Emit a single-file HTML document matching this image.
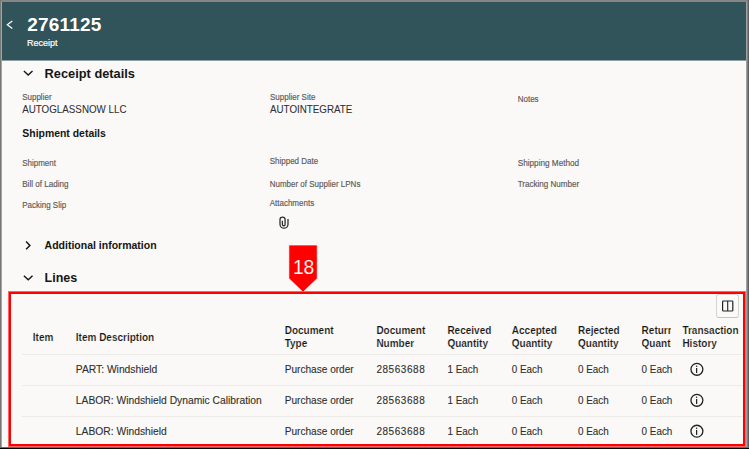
<!DOCTYPE html>
<html><head><meta charset="utf-8"><style>
html,body{margin:0;padding:0;}
body{width:749px;height:449px;position:relative;overflow:hidden;background:#595959;font-family:"Liberation Sans",sans-serif;}
.frame{position:absolute;left:0;top:0;width:749px;height:449px;background:#858585;}
.fl1{position:absolute;left:0;top:0;width:1px;height:447px;background:#777;}
.fl2{position:absolute;left:1px;top:2px;width:1px;height:445px;background:#a5a5a5;}
.fr1{position:absolute;left:746px;top:2px;width:1px;height:445px;background:#a0a0a0;}
.fr2{position:absolute;left:747px;top:0;width:1px;height:447px;background:#7f7f7f;}
.fr3{position:absolute;left:748px;top:0;width:1px;height:447px;background:#606060;}
.fb1{position:absolute;left:0;top:447px;width:749px;height:1px;background:#5f6e6e;}
.fb2{position:absolute;left:0;top:448px;width:749px;height:1px;background:#000;}
.page{position:absolute;left:2px;top:2px;width:744px;height:445px;background:#faf9f7;overflow:hidden;}
.hdr{position:absolute;left:2px;top:2px;width:744px;height:58px;background:#31535a;}
.hdr2{position:absolute;left:2px;top:60px;width:744px;height:1px;background:#8c9fa2;}
.t{position:absolute;white-space:nowrap;line-height:1;}
.sep{position:absolute;left:22px;width:721px;height:1px;background:#ecebe8;}
svg{position:absolute;left:0;top:0;}
.redbox{position:absolute;left:9px;top:292px;width:732px;height:150px;border:2px solid #ff0000;box-shadow:0 0 0 1px rgba(255,0,0,0.6);}
.clip{position:absolute;left:641.6px;top:300px;width:29.4px;height:60px;overflow:hidden;}
.btn{position:absolute;left:716px;top:294px;width:23px;height:24px;border:1px solid #d6d4d1;border-bottom-color:#c6c4c1;border-radius:3px;background:#fbfaf9;box-sizing:border-box;}
</style></head><body>
<div class="frame"></div><div class="fl1"></div><div class="fl2"></div><div class="fr1"></div><div class="fr2"></div><div class="fr3"></div><div class="fb1"></div><div class="fb2"></div>
<div class="page"></div>
<div class="hdr"></div><div class="hdr2"></div>
<div class="sep" style="top:354px"></div>
<div class="sep" style="top:385px"></div>
<div class="sep" style="top:416px"></div>
<div class="t" style="left:27.20px;top:15.32px;font-size:19px;font-weight:700;color:#ffffff;letter-spacing:0.2px;">2761125</div><div class="t" style="left:27.00px;top:38.98px;font-size:9px;font-weight:400;color:#ffffff;-webkit-text-stroke:0.2px #ffffff;">Receipt</div><div class="t" style="left:44.60px;top:67.56px;font-size:12.8px;font-weight:700;color:#161513;">Receipt details</div><div class="t" style="left:22.20px;top:93.83px;font-size:8px;font-weight:400;color:#5c5a58;transform:scaleY(1.06);transform-origin:0 6.77px;-webkit-text-stroke:0.15px #5c5a58;">Supplier</div><div class="t" style="left:22.20px;top:104.50px;font-size:9.8px;font-weight:400;color:#2f2e2c;transform:scaleY(1.2);transform-origin:0 8.30px;-webkit-text-stroke:0.05px #2f2e2c;">AUTOGLASSNOW LLC</div><div class="t" style="left:270.00px;top:94.23px;font-size:8px;font-weight:400;color:#5c5a58;transform:scaleY(1.06);transform-origin:0 6.77px;-webkit-text-stroke:0.15px #5c5a58;">Supplier Site</div><div class="t" style="left:270.00px;top:104.90px;font-size:9.8px;font-weight:400;color:#2f2e2c;transform:scaleY(1.2);transform-origin:0 8.30px;-webkit-text-stroke:0.05px #2f2e2c;">AUTOINTEGRATE</div><div class="t" style="left:517.70px;top:96.23px;font-size:8px;font-weight:400;color:#5c5a58;transform:scaleY(1.06);transform-origin:0 6.77px;-webkit-text-stroke:0.15px #5c5a58;">Notes</div><div class="t" style="left:22.30px;top:129.25px;font-size:10.45px;font-weight:700;color:#161513;">Shipment details</div><div class="t" style="left:22.20px;top:159.53px;font-size:8px;font-weight:400;color:#5c5a58;transform:scaleY(1.06);transform-origin:0 6.77px;-webkit-text-stroke:0.15px #5c5a58;">Shipment</div><div class="t" style="left:269.70px;top:157.83px;font-size:8px;font-weight:400;color:#5c5a58;transform:scaleY(1.06);transform-origin:0 6.77px;-webkit-text-stroke:0.15px #5c5a58;">Shipped Date</div><div class="t" style="left:517.70px;top:159.56px;font-size:8.2px;font-weight:400;color:#5c5a58;transform:scaleY(1.06);transform-origin:0 6.94px;-webkit-text-stroke:0.15px #5c5a58;">Shipping Method</div><div class="t" style="left:22.20px;top:181.24px;font-size:8.1px;font-weight:400;color:#5c5a58;transform:scaleY(1.06);transform-origin:0 6.86px;-webkit-text-stroke:0.15px #5c5a58;">Bill of Lading</div><div class="t" style="left:269.70px;top:181.33px;font-size:8px;font-weight:400;color:#5c5a58;transform:scaleY(1.06);transform-origin:0 6.77px;-webkit-text-stroke:0.15px #5c5a58;">Number of Supplier LPNs</div><div class="t" style="left:517.70px;top:180.77px;font-size:8.07px;font-weight:400;color:#5c5a58;transform:scaleY(1.06);transform-origin:0 6.83px;-webkit-text-stroke:0.15px #5c5a58;">Tracking Number</div><div class="t" style="left:22.20px;top:201.93px;font-size:8px;font-weight:400;color:#5c5a58;transform:scaleY(1.06);transform-origin:0 6.77px;-webkit-text-stroke:0.15px #5c5a58;">Packing Slip</div><div class="t" style="left:269.70px;top:199.93px;font-size:8px;font-weight:400;color:#5c5a58;transform:scaleY(1.06);transform-origin:0 6.77px;-webkit-text-stroke:0.15px #5c5a58;">Attachments</div><div class="t" style="left:44.60px;top:240.31px;font-size:10.5px;font-weight:700;color:#161513;">Additional information</div><div class="t" style="left:44.60px;top:272.22px;font-size:12.5px;font-weight:700;color:#161513;">Lines</div><div class="t" style="left:32.80px;top:332.84px;font-size:10px;font-weight:700;color:#161513;-webkit-text-stroke:0.15px #faf9f7;">Item</div><div class="t" style="left:75.80px;top:332.84px;font-size:10px;font-weight:700;color:#161513;-webkit-text-stroke:0.15px #faf9f7;">Item Description</div><div class="t" style="left:284.70px;top:325.94px;font-size:10px;font-weight:700;color:#161513;-webkit-text-stroke:0.15px #faf9f7;">Document</div><div class="t" style="left:284.70px;top:339.14px;font-size:10px;font-weight:700;color:#161513;-webkit-text-stroke:0.15px #faf9f7;">Type</div><div class="t" style="left:376.40px;top:325.94px;font-size:10px;font-weight:700;color:#161513;-webkit-text-stroke:0.15px #faf9f7;">Document</div><div class="t" style="left:376.40px;top:339.14px;font-size:10px;font-weight:700;color:#161513;-webkit-text-stroke:0.15px #faf9f7;">Number</div><div class="t" style="left:447.40px;top:325.94px;font-size:10px;font-weight:700;color:#161513;-webkit-text-stroke:0.15px #faf9f7;">Received</div><div class="t" style="left:447.40px;top:339.14px;font-size:10px;font-weight:700;color:#161513;-webkit-text-stroke:0.15px #faf9f7;">Quantity</div><div class="t" style="left:511.80px;top:325.94px;font-size:10px;font-weight:700;color:#161513;-webkit-text-stroke:0.15px #faf9f7;">Accepted</div><div class="t" style="left:511.80px;top:339.14px;font-size:10px;font-weight:700;color:#161513;-webkit-text-stroke:0.15px #faf9f7;">Quantity</div><div class="t" style="left:578.00px;top:325.94px;font-size:10px;font-weight:700;color:#161513;-webkit-text-stroke:0.15px #faf9f7;">Rejected</div><div class="t" style="left:578.00px;top:339.14px;font-size:10px;font-weight:700;color:#161513;-webkit-text-stroke:0.15px #faf9f7;">Quantity</div><div class="t" style="left:682.40px;top:325.94px;font-size:10px;font-weight:700;color:#161513;-webkit-text-stroke:0.15px #faf9f7;">Transaction</div><div class="t" style="left:682.40px;top:339.14px;font-size:10px;font-weight:700;color:#161513;-webkit-text-stroke:0.15px #faf9f7;">History</div><div class="t" style="left:75.80px;top:364.68px;font-size:10.3px;font-weight:400;color:#2f2e2c;transform:scaleY(1.06);transform-origin:0 8.72px;-webkit-text-stroke:0.1px #2f2e2c;">PART: Windshield</div><div class="t" style="left:284.70px;top:364.85px;font-size:10.1px;font-weight:400;color:#2f2e2c;transform:scaleY(1.06);transform-origin:0 8.55px;-webkit-text-stroke:0.1px #2f2e2c;">Purchase order</div><div class="t" style="left:376.40px;top:364.94px;font-size:10px;font-weight:400;color:#2f2e2c;transform:scaleY(1.06);transform-origin:0 8.46px;-webkit-text-stroke:0.1px #2f2e2c;letter-spacing:0.55px;">28563688</div><div class="t" style="left:447.40px;top:365.02px;font-size:9.9px;font-weight:400;color:#2f2e2c;transform:scaleY(1.06);transform-origin:0 8.38px;-webkit-text-stroke:0.1px #2f2e2c;">1 Each</div><div class="t" style="left:511.80px;top:365.02px;font-size:9.9px;font-weight:400;color:#2f2e2c;transform:scaleY(1.06);transform-origin:0 8.38px;-webkit-text-stroke:0.1px #2f2e2c;">0 Each</div><div class="t" style="left:578.00px;top:365.02px;font-size:9.9px;font-weight:400;color:#2f2e2c;transform:scaleY(1.06);transform-origin:0 8.38px;-webkit-text-stroke:0.1px #2f2e2c;">0 Each</div><div class="t" style="left:641.60px;top:365.02px;font-size:9.9px;font-weight:400;color:#2f2e2c;transform:scaleY(1.06);transform-origin:0 8.38px;-webkit-text-stroke:0.1px #2f2e2c;">0 Each</div><div class="t" style="left:75.80px;top:395.88px;font-size:10.3px;font-weight:400;color:#2f2e2c;transform:scaleY(1.06);transform-origin:0 8.72px;-webkit-text-stroke:0.1px #2f2e2c;">LABOR: Windshield Dynamic Calibration</div><div class="t" style="left:284.70px;top:396.05px;font-size:10.1px;font-weight:400;color:#2f2e2c;transform:scaleY(1.06);transform-origin:0 8.55px;-webkit-text-stroke:0.1px #2f2e2c;">Purchase order</div><div class="t" style="left:376.40px;top:396.14px;font-size:10px;font-weight:400;color:#2f2e2c;transform:scaleY(1.06);transform-origin:0 8.46px;-webkit-text-stroke:0.1px #2f2e2c;letter-spacing:0.55px;">28563688</div><div class="t" style="left:447.40px;top:396.22px;font-size:9.9px;font-weight:400;color:#2f2e2c;transform:scaleY(1.06);transform-origin:0 8.38px;-webkit-text-stroke:0.1px #2f2e2c;">1 Each</div><div class="t" style="left:511.80px;top:396.22px;font-size:9.9px;font-weight:400;color:#2f2e2c;transform:scaleY(1.06);transform-origin:0 8.38px;-webkit-text-stroke:0.1px #2f2e2c;">0 Each</div><div class="t" style="left:578.00px;top:396.22px;font-size:9.9px;font-weight:400;color:#2f2e2c;transform:scaleY(1.06);transform-origin:0 8.38px;-webkit-text-stroke:0.1px #2f2e2c;">0 Each</div><div class="t" style="left:641.60px;top:396.22px;font-size:9.9px;font-weight:400;color:#2f2e2c;transform:scaleY(1.06);transform-origin:0 8.38px;-webkit-text-stroke:0.1px #2f2e2c;">0 Each</div><div class="t" style="left:75.80px;top:427.08px;font-size:10.3px;font-weight:400;color:#2f2e2c;transform:scaleY(1.06);transform-origin:0 8.72px;-webkit-text-stroke:0.1px #2f2e2c;">LABOR: Windshield</div><div class="t" style="left:284.70px;top:427.25px;font-size:10.1px;font-weight:400;color:#2f2e2c;transform:scaleY(1.06);transform-origin:0 8.55px;-webkit-text-stroke:0.1px #2f2e2c;">Purchase order</div><div class="t" style="left:376.40px;top:427.34px;font-size:10px;font-weight:400;color:#2f2e2c;transform:scaleY(1.06);transform-origin:0 8.46px;-webkit-text-stroke:0.1px #2f2e2c;letter-spacing:0.55px;">28563688</div><div class="t" style="left:447.40px;top:427.42px;font-size:9.9px;font-weight:400;color:#2f2e2c;transform:scaleY(1.06);transform-origin:0 8.38px;-webkit-text-stroke:0.1px #2f2e2c;">1 Each</div><div class="t" style="left:511.80px;top:427.42px;font-size:9.9px;font-weight:400;color:#2f2e2c;transform:scaleY(1.06);transform-origin:0 8.38px;-webkit-text-stroke:0.1px #2f2e2c;">0 Each</div><div class="t" style="left:578.00px;top:427.42px;font-size:9.9px;font-weight:400;color:#2f2e2c;transform:scaleY(1.06);transform-origin:0 8.38px;-webkit-text-stroke:0.1px #2f2e2c;">0 Each</div><div class="t" style="left:641.60px;top:427.42px;font-size:9.9px;font-weight:400;color:#2f2e2c;transform:scaleY(1.06);transform-origin:0 8.38px;-webkit-text-stroke:0.1px #2f2e2c;">0 Each</div>
<div class="clip"><div class="t" style="left:0.00px;top:25.93px;font-size:10px;font-weight:700;color:#161513;-webkit-text-stroke:0.15px #faf9f7;">Return</div><div class="t" style="left:0.00px;top:39.14px;font-size:10px;font-weight:700;color:#161513;-webkit-text-stroke:0.15px #faf9f7;">Quantity</div></div>
<div class="btn"></div>
<svg width="749" height="449" viewBox="0 0 749 449">
  <polyline points="12.3,20.9 7.3,24.7 12.3,28.5" fill="none" stroke="#fff" stroke-width="1.25"/>
  <polyline points="23.9,71.0 28.2,75.0 32.5,71.0" fill="none" stroke="#161513" stroke-width="1.4"/>
  <polyline points="26.1,241.5 29.9,245.4 26.1,249.3" fill="none" stroke="#161513" stroke-width="1.45"/>
  <polyline points="23.9,275.8 28.2,279.8 32.5,275.8" fill="none" stroke="#161513" stroke-width="1.4"/>
  <path transform="translate(0,0.4)" d="M288,218.6 V223.8 A4,4 0 0 1 280,223.8 V219.2 A2.55,2.55 0 0 1 285.1,219.2 V224 A1.35,1.35 0 0 1 282.4,224 V220.4" fill="none" stroke="#2e2e2e" stroke-width="1.3"/>
  <rect x="722.6" y="301" width="10.2" height="10" rx="0.8" fill="none" stroke="#222" stroke-width="1.2"/>
  <line x1="727.7" y1="301" x2="727.7" y2="311" stroke="#222" stroke-width="1.1"/>
  <circle cx="696.9" cy="369.3" r="5.95" fill="none" stroke="#222" stroke-width="1.3"/><line x1="696.6" y1="368.0" x2="696.6" y2="373.0" stroke="#222" stroke-width="1.25"/><circle cx="696.6" cy="366.3" r="0.75" fill="#222"/><circle cx="696.9" cy="400.3" r="5.95" fill="none" stroke="#222" stroke-width="1.3"/><line x1="696.6" y1="399.0" x2="696.6" y2="404.0" stroke="#222" stroke-width="1.25"/><circle cx="696.6" cy="397.3" r="0.75" fill="#222"/><circle cx="696.9" cy="431.2" r="5.95" fill="none" stroke="#222" stroke-width="1.3"/><line x1="696.6" y1="429.9" x2="696.6" y2="434.9" stroke="#222" stroke-width="1.25"/><circle cx="696.6" cy="428.2" r="0.75" fill="#222"/>
  <path d="M288.9,245.1 H317.2 V278.5 L303,292 L288.9,278.5 Z" fill="#ff0000" stroke="#fff" stroke-width="0.6"/>
</svg>
<div class="t" style="left:292.9px;top:257.56px;font-size:19.3px;color:#fff;-webkit-text-stroke:0.15px #ff0000">18</div>
<div class="redbox"></div>
</body></html>
